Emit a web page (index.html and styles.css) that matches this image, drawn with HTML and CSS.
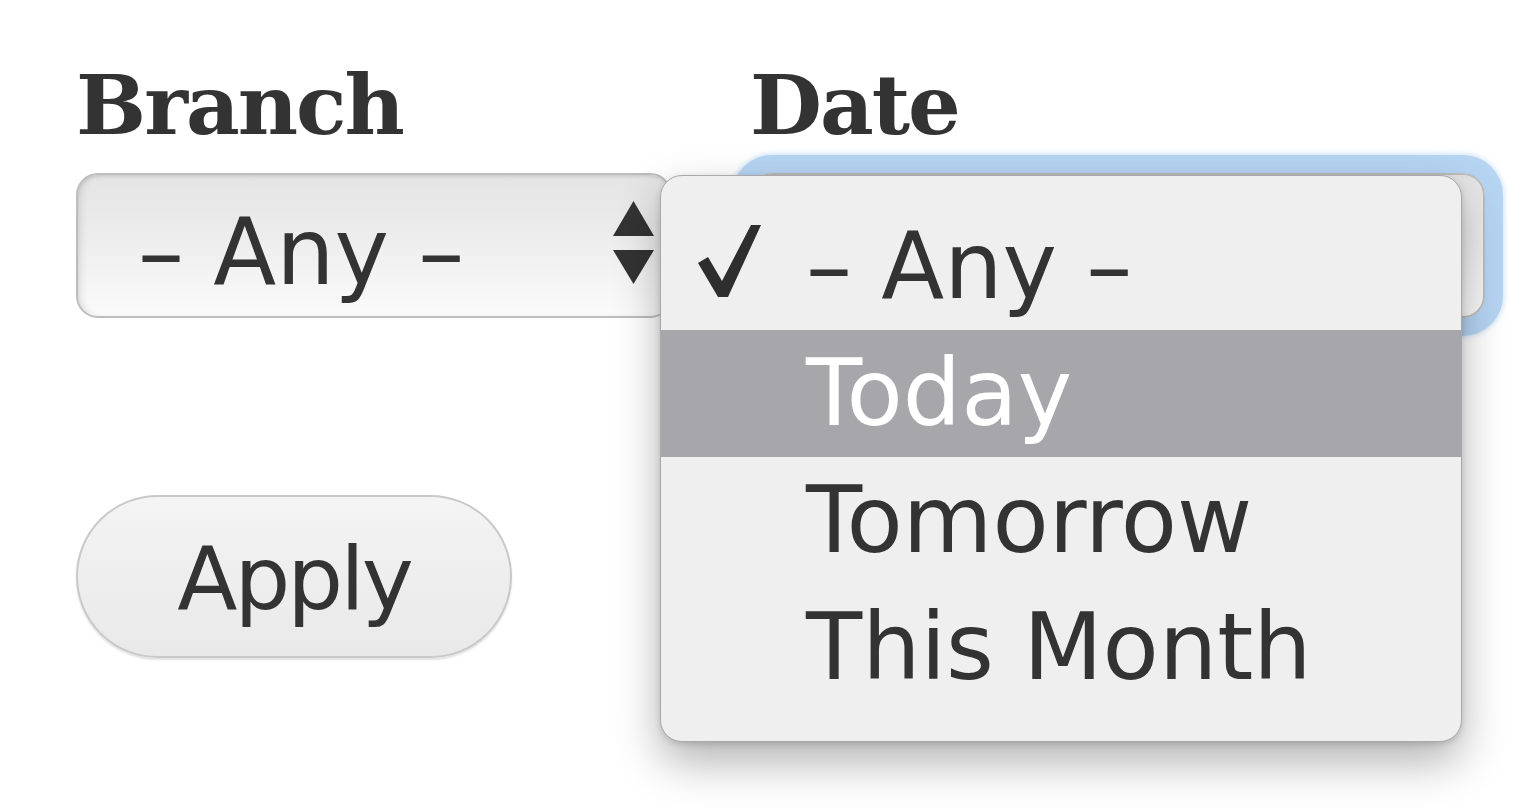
FILE: index.html
```html
<!DOCTYPE html>
<html lang="en">
<head>
    <meta charset="UTF-8">
    <meta name="viewport" content="width=device-width, initial-scale=1.0">
    <title>Filters</title>
    <link rel="stylesheet" href="styles.css">
</head>
<body>
    <form id="filters">
        <div class="fields">
            <div class="field">
                <label>Branch</label>
                <div class="select">
                    <span class="value">– Any –</span>
                    <svg class="arrows" width="41" height="83" viewBox="0 0 41 83">
                        <polygon points="20.5,0 41,35 0,35" fill="#333"/>
                        <polygon points="0,49 41,49 20.5,83" fill="#333"/>
                    </svg>
                </div>
            </div>
            <div class="field date-field">
                <label>Date</label>
                <div class="select wide focused"></div>
                <ul class="menu">
                    <li class="checked">
                        <svg class="check" width="63" height="72" viewBox="0 0 63 72">
                            <path d="M0 38 L10 32 L24 56 L53 0 L63 0 L30 72 L20 72 Z" fill="#2e2e2e"/>
                        </svg>
                        <span>– Any –</span>
                    </li>
                    <li class="hover"><span>Today</span></li>
                    <li><span>Tomorrow</span></li>
                    <li><span>This Month</span></li>
                </ul>
            </div>
        </div>
        <button type="button" class="apply">Apply</button>
    </form>
</body>
</html>
```
FILE: styles.css
```css
html, body {
    height: 100%;
}
body {
    box-sizing: border-box;
    margin: 0;
    padding: 57px 0 0 76px;
    background-color: #fff;
    font-family: "DejaVu Sans", Verdana, sans-serif;
    color: #333;
}
.fields {
    display: flex;
    gap: 78px;
}
.field {
    position: relative;
    display: flex;
    flex-direction: column;
}
label {
    font-family: "DejaVu Serif", Georgia, serif;
    font-weight: bold;
    font-size: 83px;
    line-height: 96px;
    letter-spacing: -2px;
    color: #333;
    margin-bottom: 20px;
}
.select {
    box-sizing: border-box;
    width: 596px;
    height: 145px;
    border: 2px solid #bdbdbd;
    border-radius: 22px;
    background: linear-gradient(#e4e4e4, #ededed 45%, #f7f7f7 85%, #fbfbfb);
    box-shadow: inset 6px 0 8px -4px rgba(0,0,0,0.12), inset 0 2px 3px rgba(0,0,0,0.08);
    display: flex;
    align-items: center;
    justify-content: space-between;
    padding: 0 16px 0 60px;
    font-size: 92px;
    line-height: 120px;
}
.select .value {
    margin-top: 14px;
}
.select .arrows {
    margin-top: -6px;
}
.select.wide {
    width: 735px;
}
.select.focused {
    box-shadow: 0 0 0 18px #b6d5f3, 0 0 4px 20px rgba(182,213,243,0.5), inset 6px 0 8px -4px rgba(0,0,0,0.12);
}
.menu {
    position: absolute;
    left: -90px;
    top: 118px;
    box-sizing: border-box;
    width: 802px;
    height: 567px;
    margin: 0;
    padding: 27px 0 0 0;
    list-style: none;
    background-color: #efefef;
    border: 1px solid #a9a9a9;
    border-radius: 22px;
    box-shadow: 0 20px 45px rgba(0,0,0,0.3), 0 2px 6px rgba(0,0,0,0.15);
}
.menu li {
    display: flex;
    align-items: center;
    height: 127px;
    padding-left: 145px;
    font-size: 92px;
    line-height: 127px;
    color: #333;
    position: relative;
}
.menu li .check {
    position: absolute;
    left: 37px;
    top: 22px;
}
.menu li.hover {
    background-color: #a7a6ab;
    color: #fff;
}
.apply {
    margin-top: 177px;
    box-sizing: border-box;
    width: 436px;
    height: 163px;
    border: 2px solid #c9c9c9;
    border-radius: 82px;
    background: linear-gradient(#f4f4f4, #eeeeee 50%, #e9e9e9);
    box-shadow: 0 2px 2px rgba(0,0,0,0.12);
    font-family: "DejaVu Sans", Verdana, sans-serif;
    font-size: 88px;
    letter-spacing: -3px;
    color: #333;
    padding: 4px 0 0 0;
    cursor: pointer;
}
```
